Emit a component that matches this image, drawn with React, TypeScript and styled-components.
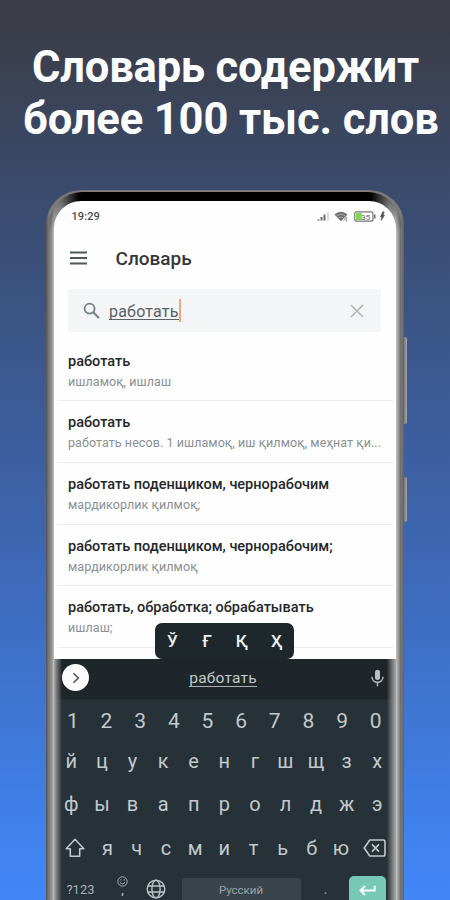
import React from "react";
import styled, { createGlobalStyle, css } from "styled-components";

const Global = createGlobalStyle`
  *, *::before, *::after { box-sizing: border-box; }
  body { margin: 0; background: #3d5f9e; }
`;

const Page = styled.main`
  width: 450px;
  height: 900px;
  overflow: hidden;
  display: flex;
  flex-direction: column;
  font-family: Roboto, "Noto Sans", sans-serif;
  background: linear-gradient(180deg, #3b3c45 0, #3b3d47 20px, #3a4a6a 180px, #3d61a5 480px, #4080ea 820px, #4287f8 900px);
`;

const Headline = styled.h1`
  margin: 0;
  height: 190px;
  flex: none;
  padding-top: 42px;
  color: #fbfdff;
  font-size: 43.5px;
  line-height: 52px;
  font-weight: 700;
  white-space: nowrap;
`;

const HeadlineRow = styled.span<{ $left: number; $spacing: number }>`
  display: block;
  padding-left: ${(p) => p.$left}px;
  letter-spacing: ${(p) => p.$spacing}px;
`;

const Device = styled.div`
  display: flex;
  align-items: flex-start;
  padding-left: 46px;
`;

const Frame = styled.div`
  width: 358px;
  height: 730px;
  flex: none;
  padding: 1px 3px 0;
  border-radius: 35px 35px 0 0;
  background: linear-gradient(90deg, #55524f 0, #7e7c7a 3px, #7e7c7a 355px, #615f5e 100%);
  border-top: 1px solid #73767c;
`;

const Bezel = styled.div`
  height: 729px;
  padding: 9px 5px 0;
  border-radius: 33px 33px 0 0;
  background:
    linear-gradient(90deg, rgba(0, 0, 0, 0) 12px, #000 30px, #000 322px, rgba(0, 0, 0, 0) 340px) 0 0 / 100% 26px no-repeat,
    linear-gradient(180deg, rgba(0, 0, 0, 0.45) 0, rgba(0, 0, 0, 0.45) 9px, rgba(0, 0, 0, 0) 40px),
    linear-gradient(90deg, #777 0, #979797 3px, #c2c2c2 5px, #c2c2c2 347px, #8f8f8f 350px, #666 100%);
`;

const Screen = styled.div`
  height: 720px;
  overflow: hidden;
  border-radius: 27px 27px 0 0;
  background: #fefefe;
`;

const SideButtons = styled.div`
  display: flex;
  flex-direction: column;
  gap: 53px;
  padding-top: 147px;
`;

const SideButton = styled.div<{ $height: number }>`
  width: 3px;
  height: ${(p) => p.$height}px;
  border-radius: 0 2px 2px 0;
  background: linear-gradient(90deg, #77797e, #a2a5ab);
`;

const StatusBar = styled.div`
  height: 30px;
  display: flex;
  align-items: center;
  justify-content: space-between;
  padding: 0 11px 0 17.5px;
  color: #4a4a4a;
  font-size: 11px;
  font-weight: 500;
  letter-spacing: 0.1px;
`;

const StatusIcons = styled.div`
  display: flex;
  align-items: center;
  gap: 4.5px;
`;

const AppBar = styled.header`
  height: 58px;
  display: flex;
  align-items: center;
  gap: 29px;
  padding: 0 0 5px 15.5px;
`;

const AppTitle = styled.div`
  color: #33373b;
  font-size: 19px;
  line-height: 24px;
  font-weight: 500;
  letter-spacing: 0;
  padding-top: 2px;
`;

const SearchBox = styled.div`
  height: 43px;
  margin: 0 15px 0 14px;
  display: flex;
  align-items: center;
  padding: 0 17px 0 15px;
  border-radius: 3px;
  background: #f3f5f7;
`;

const Query = styled.div`
  margin-left: 9px;
  flex: 1;
  display: flex;
  align-items: center;
  color: #596166;
  font-size: 16px;
  line-height: 19px;
  letter-spacing: 0.2px;
`;

const QueryText = styled.span`
  border-bottom: 1px solid #596166;
  height: 18px;
`;

const Caret = styled.span`
  width: 2.5px;
  height: 23px;
  background: #f0a67d;
`;

const Results = styled.div`
  height: 326.5px;
  overflow: hidden;
  padding: 7.5px 3px 0;
`;

const Result = styled.div`
  height: 61.7px;
  padding: 12px 10px 0 11px;
  border-bottom: 1.5px solid #ebeced;
`;

const Term = styled.div`
  color: #24282b;
  font-size: 14.5px;
  line-height: 20px;
  font-weight: 500;
  white-space: nowrap;
`;

const Translation = styled.div`
  color: #8a9093;
  font-size: 12.5px;
  line-height: 20px;
  letter-spacing: 0.07px;
  white-space: nowrap;
`;

const Keyboard = styled.section`
  position: relative;
  height: 250px;
  color: #c3c9cc;
  background:
    linear-gradient(90deg, #aaa 0, rgba(125, 128, 130, 0.85) 3px, rgba(39, 48, 54, 0) 8px, rgba(39, 48, 54, 0) 333px, rgba(125, 128, 130, 0.85) 338px, #aaa 342px),
    linear-gradient(180deg, #1f262a 0, #1f262a 40px, #273138 41px, #273138 100%);
`;

const ExtraLetters = styled.div`
  position: absolute;
  left: 101px;
  top: -36px;
  width: 139px;
  height: 36px;
  display: grid;
  grid-template-columns: repeat(4, 1fr);
  place-items: center;
  border-radius: 7px;
  background: #1d272c;
  color: #eef1f2;
  font-size: 17px;
  font-weight: 500;
`;

const Suggestions = styled.div`
  height: 40px;
  display: grid;
  grid-template-columns: 60px 1fr 60px;
  align-items: center;
  padding: 0 12px 2px 8px;
`;

const Suggestion = styled.div`
  justify-self: center;
  font-size: 15.5px;
  line-height: 17px;
  letter-spacing: 0.2px;
  border-bottom: 1px solid #aab0b3;
  height: 17px;
  margin-top: 2px;
`;

const Expand = styled.div`
  width: 27px;
  height: 27px;
  display: flex;
  align-items: center;
  justify-content: center;
  border-radius: 50%;
  background: #fcfcfc;
`;

const MicSlot = styled.div`
  display: flex;
  justify-self: end;
`;

const KeyRow = styled.div<{ $height: number; $size?: number }>`
  height: ${(p) => p.$height}px;
  margin: 0 3.5px 0 2px;
  display: flex;
  align-items: center;
  font-size: ${(p) => p.$size ?? 20}px;
`;

const Key = styled.div<{ $width?: number }>`
  display: flex;
  align-items: center;
  justify-content: center;
  line-height: 24px;
  ${(p) =>
    p.$width
      ? css`flex: none; width: ${p.$width}px;`
      : css`flex: 1;`}
`;

const BottomRow = styled.div`
  height: 42px;
  display: grid;
  grid-template-columns: 53px 31px 36px 7px 120px 46px 41px;
  align-items: start;
  justify-items: center;
`;

const SymbolsKey = styled.div`
  padding-top: 15px;
  font-size: 13px;
  line-height: 16px;
  color: #a8b0b4;
`;

const EmojiKey = styled.div`
  display: flex;
  flex-direction: column;
  align-items: center;
  padding-top: 9px;
  font-size: 13px;
  line-height: 12px;
`;

const Comma = styled.span`
  margin-top: -3px;
`;

const GlobeKey = styled.div`
  padding-top: 12px;
  display: flex;
`;

const SpaceKey = styled.div`
  grid-column: 5;
  width: 119px;
  height: 34px;
  margin-top: 11px;
  padding-top: 5px;
  border-radius: 3px;
  background: #39434a;
  color: #9ca4a8;
  text-align: center;
  font-size: 11.5px;
  line-height: 14px;
`;

const PeriodKey = styled.div`
  padding: 11px 0 0 3px;
  font-size: 17px;
  line-height: 20px;
  color: #8b9396;
`;

const EnterKey = styled.div`
  width: 37px;
  height: 34px;
  margin-top: 9px;
  padding: 6px 0 0 10px;
  border-radius: 5px;
  background: #78c8b6;
`;

const results = [
  { term: "работать", text: "ишламоқ, ишлаш" },
  { term: "работать", text: "работать несов. 1 ишламоқ, иш қилмоқ, меҳнат қи..." },
  { term: "работать поденщиком, чернорабочим", text: "мардикорлик қилмоқ;" },
  { term: "работать поденщиком, чернорабочим;", text: "мардикорлик қилмоқ" },
  { term: "работать, обработка; обрабатывать", text: "ишлаш;" },
];

const MenuIcon = () => (
  <svg width="17" height="14" viewBox="0 0 17 14" stroke="#50575b" strokeWidth="1.8">
    <path d="M0 1.5h17M0 7h17M0 12.5h17" />
  </svg>
);

const SearchIcon = () => (
  <svg width="17" height="17" viewBox="0 0 17 17" fill="none" stroke="#768085" strokeWidth="1.8">
    <circle cx="6.6" cy="6.6" r="5" />
    <path d="M10.3 10.3l5.6 5.6" strokeWidth="2.1" />
  </svg>
);

const ClearIcon = () => (
  <svg width="14" height="14" viewBox="0 0 14 14" stroke="#b1b6b8" strokeWidth="1.6">
    <path d="M1 1l12 12M13 1L1 13" />
  </svg>
);

const SignalIcon = () => (
  <svg width="13" height="10" viewBox="0 0 13 10">
    <path d="M0.5 9.5V8.2h2v1.3zM3.5 9.5V6h2v3.5zM6.5 9.5V3.6h2v5.9z" fill="#6d6d6d" />
    <path d="M9.8 9.5V0.8h2.4v8.7z" fill="#dedede" />
  </svg>
);

const WifiIcon = () => (
  <svg width="15" height="11" viewBox="0 0 15 11">
    <path d="M0.5 3.4Q7 -2 13.5 3.4L7 10.2z" fill="#6b6b6b" />
    <path d="M2.5 5Q7 1.6 11.5 5M4.4 7Q7 5 9.5 7" fill="none" stroke="#c9c9c9" strokeWidth="0.7" />
    <path d="M9.6 10.5l1.6-4.2 1.5 4.2M12.6 10.5V5.5" fill="none" stroke="#999" strokeWidth="0.8" />
  </svg>
);

const BatteryIcon = () => (
  <svg width="22" height="11" viewBox="0 0 22 11">
    <rect x="0.7" y="0.8" width="18.3" height="9.4" rx="2" fill="#fff" stroke="#777" strokeWidth="1.2" />
    <rect x="2" y="2" width="5.8" height="7" fill="#82d650" />
    <rect x="20" y="3.5" width="1.6" height="4" fill="#777" />
    <text x="7" y="8.6" fontSize="8" fontFamily="Roboto" fill="#777">35</text>
  </svg>
);

const BoltIcon = () => (
  <svg width="5" height="10" viewBox="0 0 5 10">
    <path d="M2.8 0.8L0.4 5.8h1.3L1.2 9.4l3.4-5.2H3.3L4.2 0.8z" fill="#505050" stroke="#505050" strokeWidth="0.5" />
  </svg>
);

const ChevronIcon = () => (
  <svg width="8" height="12" viewBox="0 0 8 12" fill="none" stroke="#555" strokeWidth="1.6">
    <path d="M1.5 1.2L6.3 6l-4.8 4.8" />
  </svg>
);

const MicIcon = () => (
  <svg width="13" height="18" viewBox="0 0 13 18" fill="none" stroke="#b9bfc2" strokeWidth="1.4">
    <rect x="4" y="0.7" width="5" height="10.2" rx="2.5" fill="#b9bfc2" stroke="none" />
    <path d="M1 7.8c0 7.2 11 7.2 11 0M6.5 13.4v3.8" />
  </svg>
);

const ShiftIcon = () => (
  <svg width="20" height="20" viewBox="0 0 20 20" fill="none" stroke="#c3c9cc" strokeWidth="1.5" strokeLinejoin="round">
    <path d="M10 1.3L1.2 10.8h4.1v7.5h9.4v-7.5h4.1z" />
  </svg>
);

const BackspaceIcon = () => (
  <svg width="23" height="18" viewBox="0 0 23 18" fill="none" stroke="#c3c9cc" strokeWidth="1.6" strokeLinejoin="round">
    <path d="M6.8 1h13.4q1.8 0 1.8 1.8v12.4q0 1.8-1.8 1.8H6.8L1.2 9z" />
    <path d="M9 5.4l7 7.2M16 5.4l-7 7.2" />
  </svg>
);

const SmileIcon = () => (
  <svg width="11" height="11" viewBox="0 0 11 11" fill="none" stroke="#a5adb1" strokeWidth="1">
    <circle cx="5.5" cy="5.5" r="4.7" />
    <path d="M2.8 6.2q2.7 3.2 5.4 0M3.8 3.2v1.3M7.2 3.2v1.3" />
  </svg>
);

const GlobeIcon = () => (
  <svg width="20" height="20" viewBox="0 0 20 20" fill="none" stroke="#bec4c7" strokeWidth="1.4">
    <circle cx="10" cy="10" r="8.8" />
    <ellipse cx="10" cy="10" rx="4.1" ry="8.8" />
    <path d="M1.8 7h16.4M1.8 13h16.4" />
  </svg>
);

const EnterIcon = () => (
  <svg width="17" height="13" viewBox="0 0 17 13" fill="none" stroke="#f3fffc" strokeWidth="2">
    <path d="M15.7 1.8v4.7H1.6M6 2L1.5 6.5 6 11" />
  </svg>
);

const Keys = ({ letters }: { letters: string }) => (
  <>
    {letters.split("").map((l) => (
      <Key key={l}>{l}</Key>
    ))}
  </>
);

export default function App() {
  return (
    <>
      <Global />
      <Page>
        <Headline>
          <HeadlineRow $left={32} $spacing={-0.17}>Словарь содержит</HeadlineRow>
          <HeadlineRow $left={23} $spacing={-0.12}>более 100 тыс. слов</HeadlineRow>
        </Headline>
        <Device>
          <Frame>
            <Bezel>
              <Screen>
                <StatusBar>
                  <span>19:29</span>
                  <StatusIcons>
                    <SignalIcon />
                    <WifiIcon />
                    <BatteryIcon />
                    <BoltIcon />
                  </StatusIcons>
                </StatusBar>
                <AppBar>
                  <MenuIcon />
                  <AppTitle>Словарь</AppTitle>
                </AppBar>
                <SearchBox>
                  <SearchIcon />
                  <Query>
                    <QueryText>работать</QueryText>
                    <Caret />
                  </Query>
                  <ClearIcon />
                </SearchBox>
                <Results>
                  {results.map((r, i) => (
                    <Result key={i}>
                      <Term>{r.term}</Term>
                      <Translation>{r.text}</Translation>
                    </Result>
                  ))}
                </Results>
                <Keyboard>
                  <ExtraLetters>
                    <span>Ў</span>
                    <span>Ғ</span>
                    <span>Қ</span>
                    <span>Ҳ</span>
                  </ExtraLetters>
                  <Suggestions>
                    <Expand>
                      <ChevronIcon />
                    </Expand>
                    <Suggestion>работать</Suggestion>
                    <MicSlot>
                      <MicIcon />
                    </MicSlot>
                  </Suggestions>
                  <KeyRow $height={44} $size={21}>
                    <Keys letters="1234567890" />
                  </KeyRow>
                  <KeyRow $height={37}>
                    <Keys letters="йцукенгшщзх" />
                  </KeyRow>
                  <KeyRow $height={49}>
                    <Keys letters="фывапролджэ" />
                  </KeyRow>
                  <KeyRow $height={38}>
                    <Key $width={37}>
                      <ShiftIcon />
                    </Key>
                    <Keys letters="ячсмитьбю" />
                    <Key $width={37}>
                      <BackspaceIcon />
                    </Key>
                  </KeyRow>
                  <BottomRow>
                    <SymbolsKey>?123</SymbolsKey>
                    <EmojiKey>
                      <SmileIcon />
                      <Comma>,</Comma>
                    </EmojiKey>
                    <GlobeKey>
                      <GlobeIcon />
                    </GlobeKey>
                    <SpaceKey>Русский</SpaceKey>
                    <PeriodKey>.</PeriodKey>
                    <EnterKey>
                      <EnterIcon />
                    </EnterKey>
                  </BottomRow>
                </Keyboard>
              </Screen>
            </Bezel>
          </Frame>
          <SideButtons>
            <SideButton $height={87} />
            <SideButton $height={45} />
          </SideButtons>
        </Device>
      </Page>
    </>
  );
}
